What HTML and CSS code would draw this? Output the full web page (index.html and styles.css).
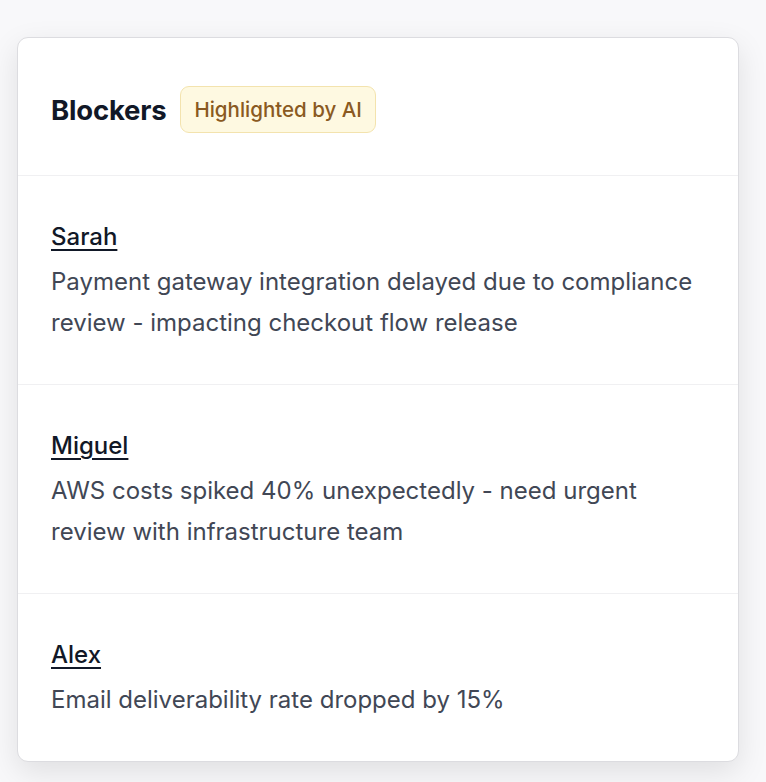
FILE: index.html
```html
<!DOCTYPE html>
<html lang="en">
<head>
<meta charset="utf-8">
<link rel="stylesheet" href="styles.css">
</head>
<body>
<div class="card">
  <div class="card-header">
    <h2 class="title">Blockers</h2>
    <span class="badge">Highlighted by AI</span>
  </div>
  <div class="row">
    <a class="name" href="#">Sarah</a>
    <p class="text">Payment gateway integration delayed due to compliance review - impacting checkout flow release</p>
  </div>
  <div class="row">
    <a class="name" href="#">Miguel</a>
    <p class="text">AWS costs spiked 40% unexpectedly - need urgent review with infrastructure team</p>
  </div>
  <div class="row">
    <a class="name" href="#">Alex</a>
    <p class="text">Email deliverability rate dropped by 15%</p>
  </div>
</div>
</body>
</html>
```

FILE: styles.css
```css
html, body {
  margin: 0;
  padding: 0;
}
body {
  background: #f8f8fa;
  font-family: Inter, "Noto Sans", sans-serif;
  padding: 37px 27px 20px 17px;
}
.card {
  background: #ffffff;
  border: 1.5px solid #dcdce0;
  border-radius: 11px;
  box-shadow: 0 10px 30px rgba(0, 0, 0, 0.10);
  overflow: hidden;
}
.card-header {
  display: flex;
  align-items: center;
  gap: 14px;
  padding: 48px 33px 42px;
  border-bottom: 1.5px solid #f0f0f2;
}
.title {
  margin: 0;
  font-size: 27.5px;
  font-weight: 700;
  color: #111827;
  letter-spacing: -0.2px;
}
.badge {
  display: inline-flex;
  align-items: center;
  height: 47px;
  padding: 0 13px;
  box-sizing: border-box;
  background: #fef9e1;
  border: 1.5px solid #f3e3ae;
  border-radius: 9px;
  color: #8a5a22;
  font-size: 20.5px;
  font-weight: 500;
}
.row {
  padding: 45px 33px 41px;
  border-bottom: 1.5px solid #f0f0f2;
  display: flex;
  flex-direction: column;
  align-items: flex-start;
  gap: 8px;
}
.row:last-child {
  border-bottom: none;
}
.name {
  font-size: 24px;
  line-height: 32px;
  font-weight: 500;
  color: #111827;
  text-decoration: underline;
  text-underline-offset: 4px;
  text-decoration-thickness: 2px;
}
.text {
  margin: 0;
  font-size: 24px;
  line-height: 41px;
  color: #414755;
}
```
